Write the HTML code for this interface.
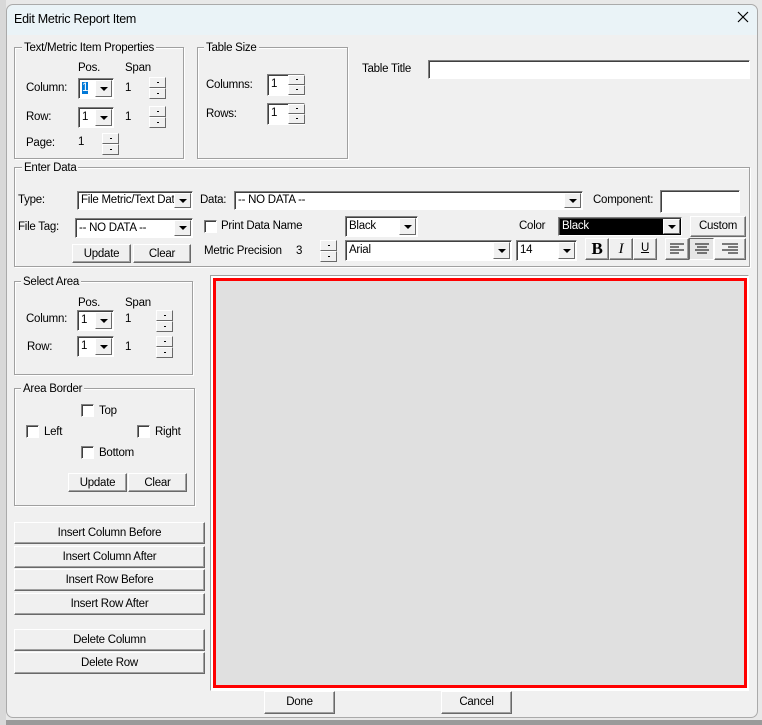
<!DOCTYPE html>
<html><head><meta charset="utf-8"><style>
*{box-sizing:border-box}
body{margin:0;width:762px;height:725px;background:#9a9a9a;font-family:"Liberation Sans",Arial,sans-serif;font-size:11.5px;letter-spacing:-0.25px;color:#000;position:relative;overflow:hidden}
.a{position:absolute}
#bgtop{left:0;top:0;width:762px;height:720px;background:#e8e8e8}
#dlg{left:6px;top:4px;width:752px;height:714px;background:#f0f0f0;border:1px solid #aaa;border-radius:7px;overflow:hidden}
.t{position:absolute;white-space:nowrap;line-height:14px}
.g{position:absolute;border:1px solid #a0a0a0;box-shadow:1px 1px 0 #fff inset,1px 1px 0 #fff}
.gl{position:absolute;background:#f0f0f0;padding:0 2px;white-space:nowrap;line-height:14px}
.sunk{position:absolute;background:#fff;border:1px solid;border-color:#808080 #fff #fff #808080;box-shadow:inset 1px 1px 0 #404040}
.btn{position:absolute;background:#f0f0f0;border:1px solid;border-color:#fff #696969 #696969 #fff;box-shadow:inset -1px -1px 0 #a0a0a0;text-align:center;line-height:18px;white-space:nowrap}
.dd{position:absolute;right:1px;top:1px;bottom:1px;width:17px;background:#f0f0f0;border:1px solid;border-color:#fff #696969 #696969 #fff}
.dd:after{content:"";position:absolute;left:4px;top:50%;margin-top:-2px;border-left:4px solid transparent;border-right:4px solid transparent;border-top:4px solid #000}
.sp{position:absolute;width:17px}
.sp div{position:absolute;left:0;width:17px;height:50%;background:#f0f0f0;border:1px solid;border-color:#fff #696969 #696969 #fff}
.sp div:after{content:"";position:absolute;left:7px;top:50%;margin-top:-1px;width:2px;height:1px;background:#000}
.cb{position:absolute;width:13px;height:13px;background:#fff;border:1px solid;border-color:#808080 #fff #fff #808080;box-shadow:inset 1px 1px 0 #404040}
.ct{position:absolute;left:3px;top:1px;line-height:16px;white-space:nowrap}
</style></head><body>
<div class="a" id="bgtop"></div>
<div class="a" style="left:0;top:0;width:6px;height:725px;background:#d8d8d8"></div>
<div class="a" id="dlg"></div>
<div class="a" style="left:7px;top:5px;width:750px;height:30px;background:#eaf3f7;border-radius:7px 7px 0 0"></div>
<div class="t" style="left:14px;top:12px;font-size:12.5px">Edit Metric Report Item</div>
<svg class="a" style="left:737px;top:11px" width="12" height="12"><path d="M1 1L11 11M11 1L1 11" stroke="#000" stroke-width="1.2"/></svg>

<div class="g" style="left:14px;top:47px;width:170px;height:112px"></div>
<div class="gl" style="left:22px;top:41px">Text/Metric Item Properties</div>
<div class="t" style="left:78px;top:61px">Pos.</div><div class="t" style="left:125px;top:61px">Span</div>
<div class="t" style="left:26px;top:81px">Column:</div>
<div class="sunk" style="left:78px;top:78px;width:36px;height:21px"><span class="ct"><span style="background:#0078d7;color:#fff">1</span></span><div class="dd"></div></div>
<div class="t" style="left:125px;top:81px">1</div>
<div class="sp" style="left:149px;top:77px;height:22px"><div style="top:0"></div><div style="top:50%"></div></div>
<div class="t" style="left:26px;top:110px">Row:</div>
<div class="sunk" style="left:78px;top:107px;width:36px;height:21px"><span class="ct">1</span><div class="dd"></div></div>
<div class="t" style="left:125px;top:110px">1</div>
<div class="sp" style="left:149px;top:106px;height:22px"><div style="top:0"></div><div style="top:50%"></div></div>
<div class="t" style="left:26px;top:136px">Page:</div>
<div class="t" style="left:78px;top:135px">1</div>
<div class="sp" style="left:102px;top:133px;height:22px"><div style="top:0"></div><div style="top:50%"></div></div>

<div class="g" style="left:197px;top:47px;width:151px;height:112px"></div>
<div class="gl" style="left:204px;top:41px">Table Size</div>
<div class="t" style="left:206px;top:78px">Columns:</div>
<div class="sunk" style="left:267px;top:74px;width:38px;height:22px"><span class="ct">1</span></div>
<div class="sp" style="left:288px;top:75px;height:20px"><div style="top:0"></div><div style="top:50%"></div></div>
<div class="t" style="left:206px;top:107px">Rows:</div>
<div class="sunk" style="left:267px;top:103px;width:38px;height:22px"><span class="ct">1</span></div>
<div class="sp" style="left:288px;top:104px;height:20px"><div style="top:0"></div><div style="top:50%"></div></div>
<div class="t" style="left:362px;top:62px">Table Title</div>
<div class="sunk" style="left:428px;top:60px;width:322px;height:19px"></div>

<div class="g" style="left:14px;top:167px;width:736px;height:100px"></div>
<div class="gl" style="left:22px;top:161px">Enter Data</div>
<div class="t" style="left:18px;top:193px">Type:</div>
<div class="sunk" style="left:77px;top:191px;width:116px;height:19px;overflow:hidden"><span class="ct" style="top:0">File Metric/Text Dat</span><div class="dd"></div></div>
<div class="t" style="left:200px;top:193px">Data:</div>
<div class="sunk" style="left:234px;top:191px;width:349px;height:19px"><span class="ct" style="top:0">-- NO DATA --</span><div class="dd"></div></div>
<div class="t" style="left:593px;top:193px">Component:</div>
<div class="sunk" style="left:660px;top:190px;width:80px;height:23px"></div>
<div class="t" style="left:18px;top:220px">File Tag:</div>
<div class="sunk" style="left:75px;top:218px;width:118px;height:20px"><span class="ct" style="top:1px">-- NO DATA --</span><div class="dd"></div></div>
<div class="cb" style="left:204px;top:220px"></div>
<div class="t" style="left:221px;top:219px">Print Data Name</div>
<div class="sunk" style="left:345px;top:216px;width:73px;height:21px"><span class="ct">Black</span><div class="dd"></div></div>
<div class="t" style="left:519px;top:219px">Color</div>
<div class="sunk" style="left:558px;top:217px;width:124px;height:19px;background:#000"><span class="ct" style="color:#fff;top:0">Black</span><div class="dd"></div></div>
<div class="btn" style="left:690px;top:216px;width:56px;height:21px">Custom</div>
<div class="btn" style="left:72px;top:244px;width:59px;height:19px">Update</div>
<div class="btn" style="left:133px;top:244px;width:58px;height:19px">Clear</div>
<div class="t" style="left:204px;top:244px">Metric Precision</div>
<div class="t" style="left:296px;top:244px">3</div>
<div class="sp" style="left:320px;top:240px;height:22px"><div style="top:0"></div><div style="top:50%"></div></div>
<div class="sunk" style="left:345px;top:240px;width:167px;height:21px"><span class="ct">Arial</span><div class="dd"></div></div>
<div class="sunk" style="left:516px;top:240px;width:61px;height:21px"><span class="ct">14</span><div class="dd"></div></div>
<div class="btn" style="left:585px;top:238px;width:24px;height:22px;font-family:'Liberation Serif',serif;font-weight:bold;font-size:17px;line-height:20px">B</div>
<div class="btn" style="left:609px;top:238px;width:24px;height:22px;font-family:'Liberation Serif',serif;font-style:italic;font-size:15px;line-height:20px">I</div>
<div class="btn" style="left:633px;top:238px;width:24px;height:22px;text-decoration:underline">U</div>
<div class="btn" style="left:665px;top:238px;width:24px;height:22px"><svg width="18" height="14" style="margin-top:3px"><path d="M2 2h14M2 5h9M2 8h14M2 11h9" stroke="#000"/></svg></div>
<div class="btn" style="left:689px;top:238px;width:25px;height:22px;border-color:#696969 #fff #fff #696969;box-shadow:none;background:#e6e6e6"><svg width="18" height="14" style="margin-top:3px"><path d="M2 2h14M4 5h10M2 8h14M4 11h10" stroke="#000"/></svg></div>
<div class="btn" style="left:714px;top:238px;width:32px;height:22px"><svg width="20" height="14" style="margin-top:3px"><path d="M2 2h16M8 5h10M2 8h16M8 11h10" stroke="#000"/></svg></div>

<div class="g" style="left:14px;top:281px;width:179px;height:94px"></div>
<div class="gl" style="left:21px;top:275px">Select Area</div>
<div class="t" style="left:78px;top:296px">Pos.</div><div class="t" style="left:125px;top:296px">Span</div>
<div class="t" style="left:26px;top:312px">Column:</div>
<div class="sunk" style="left:77px;top:310px;width:37px;height:21px"><span class="ct">1</span><div class="dd"></div></div>
<div class="t" style="left:125px;top:312px">1</div>
<div class="sp" style="left:156px;top:310px;height:22px"><div style="top:0"></div><div style="top:50%"></div></div>
<div class="t" style="left:27px;top:340px">Row:</div>
<div class="sunk" style="left:77px;top:336px;width:37px;height:21px"><span class="ct">1</span><div class="dd"></div></div>
<div class="t" style="left:125px;top:340px">1</div>
<div class="sp" style="left:156px;top:336px;height:22px"><div style="top:0"></div><div style="top:50%"></div></div>

<div class="g" style="left:14px;top:388px;width:181px;height:118px"></div>
<div class="gl" style="left:21px;top:382px">Area Border</div>
<div class="cb" style="left:81px;top:404px"></div><div class="t" style="left:99px;top:404px">Top</div>
<div class="cb" style="left:26px;top:425px"></div><div class="t" style="left:44px;top:425px">Left</div>
<div class="cb" style="left:137px;top:425px"></div><div class="t" style="left:155px;top:425px">Right</div>
<div class="cb" style="left:81px;top:446px"></div><div class="t" style="left:99px;top:446px">Bottom</div>
<div class="btn" style="left:68px;top:473px;width:59px;height:19px">Update</div>
<div class="btn" style="left:128px;top:473px;width:59px;height:19px">Clear</div>

<div class="btn" style="left:14px;top:522px;width:191px;height:22px;line-height:20px">Insert Column Before</div>
<div class="btn" style="left:14px;top:546px;width:191px;height:22px;line-height:20px">Insert Column After</div>
<div class="btn" style="left:14px;top:569px;width:191px;height:22px;line-height:20px">Insert Row Before</div>
<div class="btn" style="left:14px;top:593px;width:191px;height:22px;line-height:20px">Insert Row After</div>
<div class="btn" style="left:14px;top:629px;width:191px;height:22px;line-height:20px">Delete Column</div>
<div class="btn" style="left:14px;top:652px;width:191px;height:22px;line-height:20px">Delete Row</div>

<div class="a" style="left:210px;top:275px;width:539px;height:416px;border:1px solid;border-color:#a0a0a0 #fff #fff #a0a0a0;background:#fff"></div>
<div class="a" style="left:213px;top:278px;width:534px;height:410px;border:3px solid #f00;background:#e0e0e0"></div>

<div class="btn" style="left:264px;top:691px;width:71px;height:23px;line-height:21px">Done</div>
<div class="btn" style="left:441px;top:691px;width:71px;height:23px;line-height:21px">Cancel</div>
</body></html>
